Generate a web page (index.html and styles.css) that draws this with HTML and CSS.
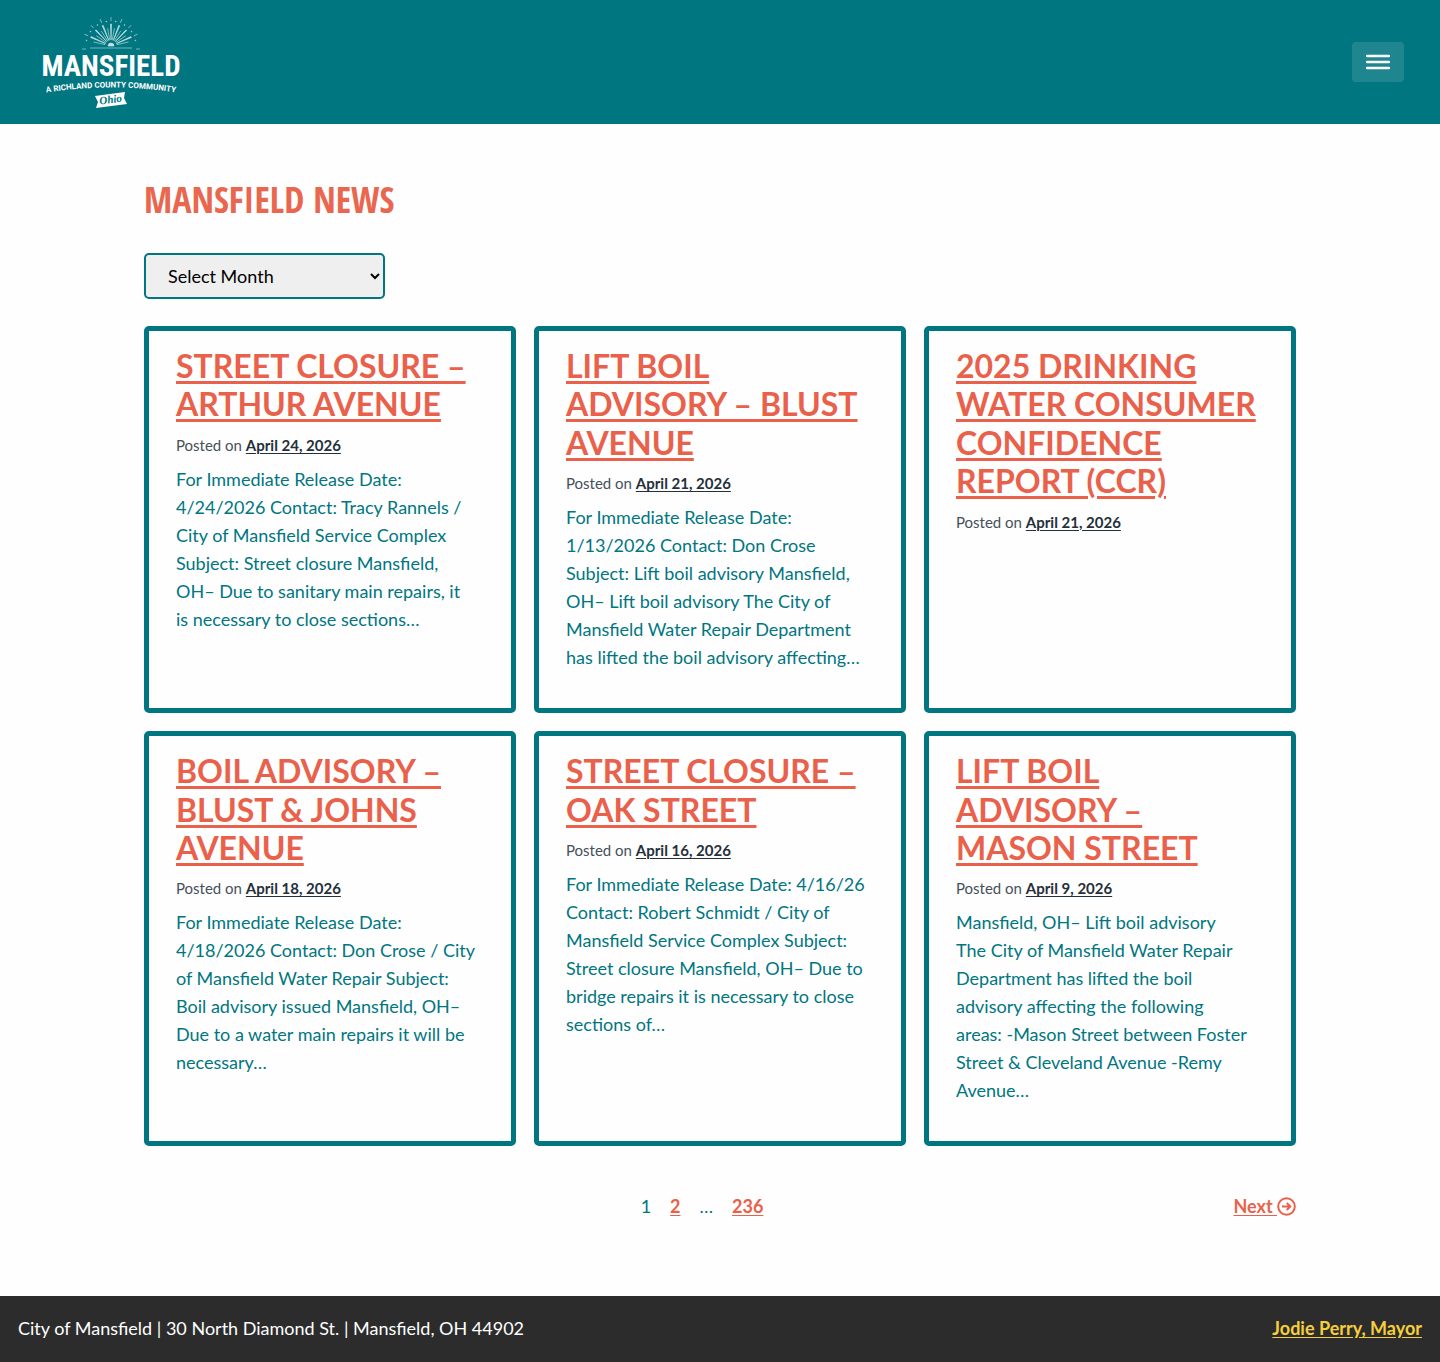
FILE: index.html
```
<!DOCTYPE html>
<html lang="en">
<head>
    <meta charset="UTF-8">
    <meta name="viewport" content="width=device-width, initial-scale=1.0">
    <title>Mansfield News</title>

    <link rel="stylesheet" href="styles.css">
</head>

<body>
    <header class="site-header">
        <a class="logo" href="#" aria-label="City of Mansfield home">
            <svg width="150" height="100" viewBox="0 0 150 100">
                <defs>
                    <g id="ray">
                        <path d="M75 28 L74.500 12 H75.500 Z" />
                        <path d="M75 9 V5" />
                    </g>
                    <g id="ray-short">
                        <path d="M75 28 V16" />
                        <circle cx="75" cy="9" r=".4" />
                    </g>
                    <path id="arc" d="M7 81 Q75 70 143 81" />
                </defs>
                <g class="sunburst">
                    <use href="#ray" />
                    <use href="#ray-short" transform="rotate(-11 75 34)" />
                    <use href="#ray-short" transform="rotate(11 75 34)" />
                    <use href="#ray" transform="rotate(-22 75 34)" />
                    <use href="#ray" transform="rotate(22 75 34)" />
                    <use href="#ray-short" transform="rotate(-33 75 34)" />
                    <use href="#ray-short" transform="rotate(33 75 34)" />
                    <use href="#ray" transform="rotate(-44 75 34)" />
                    <use href="#ray" transform="rotate(44 75 34)" />
                    <use href="#ray-short" transform="rotate(-55 75 34)" />
                    <use href="#ray-short" transform="rotate(55 75 34)" />
                    <use href="#ray" transform="rotate(-66 75 34)" />
                    <use href="#ray" transform="rotate(66 75 34)" />
                    <use href="#ray-short" transform="rotate(-77 75 34)" />
                    <use href="#ray-short" transform="rotate(77 75 34)" />
                    <path d="M72 34 a3 3 0 0 1 6 0 Z" />
                    <path d="M46 37 H50 M54 36 H96 M100 37 H104" />
                </g>
                <text class="logo-name" x="75" y="64">MANSFIELD</text>
                <text class="logo-tagline"><textPath href="#arc" startOffset="50%">A RICHLAND COUNTY COMMUNITY</textPath></text>
                <path class="ribbon" d="M59 84 L89 80 L88 86 L91 92 L60 96 L62 90 Z" />
                <text class="logo-state" x="75" y="91" transform="rotate(-7 75 91)">Ohio</text>
            </svg>
        </a>
        <button class="menu-button" aria-label="Menu">
            <svg width="24" height="16" viewBox="0 0 24 16">
                <path d="M1 2 H23 M1 8 H23 M1 14 H23" />
            </svg>
        </button>
    </header>

    <main>
        <h1>Mansfield News</h1>

        <select class="archive" aria-label="Archives">
            <option>Select Month</option>
        </select>

        <div class="posts">
            <article class="card">
                <h2><a href="#">Street Closure – Arthur Avenue</a></h2>
                <p class="posted">Posted on <a href="#">April 24, 2026</a></p>
                <p>For Immediate Release Date: 4/24/2026 Contact: Tracy Rannels / City of Mansfield Service Complex Subject: Street closure Mansfield, OH– Due to sanitary main repairs, it is&nbsp;necessary to close sections…</p>
            </article>

            <article class="card">
                <h2><a href="#">Lift Boil Advisory – Blust Avenue</a></h2>
                <p class="posted">Posted on <a href="#">April 21, 2026</a></p>
                <p>For Immediate Release Date: 1/13/2026 Contact: Don Crose Subject: Lift boil advisory Mansfield, OH– Lift boil advisory The City of Mansfield Water Repair Department has lifted the boil advisory affecting…</p>
            </article>

            <article class="card">
                <h2><a href="#">2025 Drinking Water Consumer Confidence Report (CCR)</a></h2>
                <p class="posted">Posted on <a href="#">April 21, 2026</a></p>
            </article>

            <article class="card">
                <h2><a href="#">Boil Advisory – Blust &amp; Johns Avenue</a></h2>
                <p class="posted">Posted on <a href="#">April 18, 2026</a></p>
                <p>For Immediate Release Date: 4/18/2026 Contact: Don Crose / City of Mansfield Water Repair Subject: Boil advisory issued Mansfield, OH– Due to a water main repairs it will be necessary…</p>
            </article>

            <article class="card">
                <h2><a href="#">Street Closure – Oak Street</a></h2>
                <p class="posted">Posted on <a href="#">April 16, 2026</a></p>
                <p>For Immediate Release Date: 4/16/26 Contact: Robert Schmidt / City of Mansfield Service Complex Subject: Street closure Mansfield, OH– Due to bridge repairs it is necessary to close sections of…</p>
            </article>

            <article class="card">
                <h2><a href="#">Lift Boil Advisory – Mason Street</a></h2>
                <p class="posted">Posted on <a href="#">April 9, 2026</a></p>
                <p>Mansfield, OH– Lift boil advisory <br>The City of Mansfield Water Repair Department has lifted the boil advisory affecting the following areas:&nbsp;-Mason Street between Foster Street &amp; Cleveland Avenue -Remy Avenue…</p>
            </article>
        </div>

        <nav class="pagination" aria-label="Posts">
            <div class="pages">
                <span>1</span>
                <a href="#">2</a>
                <span>…</span>
                <a href="#">236</a>
            </div>
            <a class="next" href="#">Next <svg width="19" height="19" viewBox="0 0 19 19">
                <circle cx="9.500" cy="9.500" r="8.300" />
                <path d="M5 9.500 H13 M9.800 6 L13.300 9.500 L9.800 13" />
            </svg></a>
        </nav>
    </main>

    <footer class="site-footer">
        <span>City of Mansfield | 30 North Diamond St. | Mansfield, OH 44902</span>
        <a href="#">Jodie Perry, Mayor</a>
    </footer>
</body>
</html>
```
FILE: styles.css
```
* {
    box-sizing: border-box;
}

body {
    margin: 0;
    background-color: #fefefe;
    color: #007681;
    font-family: Lato, "Open Sans", sans-serif;
    font-size: 18px;
    line-height: 28px;
}

a {
    color: #e9614a;
    font-weight: bold;
    text-underline-offset: 2px;
}

.site-header {
    display: flex;
    justify-content: space-between;
    align-items: center;
    padding: 12px 36px;
    background-color: #007681;
}

.logo svg {
    display: block;
}

.sunburst {
    fill: #c5e3e4;
    stroke: #c5e3e4;
    stroke-width: 0.6;
}

.logo-name,
.logo-tagline,
.logo-state {
    text-anchor: middle;
    font-weight: bold;
}

.logo-name {
    fill: white;
    font-family: "Roboto Condensed", Roboto, sans-serif;
    font-size: 29px;
}

.logo-tagline {
    fill: white;
    font-family: "Roboto", sans-serif;
    font-size: 8px;
}

.ribbon {
    fill: white;
}

.logo-state {
    fill: #007681;
    font-family: "Liberation Serif", serif;
    font-size: 11px;
    font-style: italic;
}

.menu-button {
    display: flex;
    justify-content: center;
    align-items: center;
    width: 52px;
    height: 40px;
    padding: 0;
    border: none;
    border-radius: 4px;
    background-color: rgba(255, 255, 255, 0.12);
}

.menu-button svg {
    fill: none;
    stroke: white;
    stroke-width: 2.5;
    stroke-linecap: round;
}

main {
    width: 80%;
    margin: 0 auto;
    padding: 54px 0 76px;
}

h1 {
    margin: 0 0 31px;
    color: #e9674f;
    font-family: "Open Sans Condensed", "Roboto Condensed", sans-serif;
    font-size: 36px;
    line-height: 44px;
    text-transform: uppercase;
}

.archive {
    display: block;
    width: 241px;
    height: 46px;
    margin-bottom: 27px;
    padding: 0 0 0 18px;
    border: 2px solid #007681;
    border-radius: 5px;
    background-color: #efefef;
    color: black;
    font-family: inherit;
    font-size: 18px;
}

.posts {
    display: grid;
    grid-template-columns: repeat(3, 1fr);
    gap: 18px;
}

.card {
    padding: 16px 32px 37px 27px;
    border: 5px solid #007681;
    border-radius: 5px;
}

.card h2 {
    margin: 0 0 9px;
    font-size: 32px;
    line-height: 1.2;
    text-transform: uppercase;
}

.card h2 a {
    text-underline-offset: 3px;
}

.card p {
    margin: 0;
}

.card .posted {
    margin-bottom: 8px;
    color: #46505a;
    font-size: 15px;
    line-height: 24px;
}

.posted a {
    color: #25303b;
}

.pagination {
    display: grid;
    grid-template-columns: 1fr auto 1fr;
    margin-top: 46px;
}

.pages {
    grid-column: 2;
    display: flex;
    gap: 19px;
    padding-right: 36px;
}

.next {
    justify-self: end;
}

.next svg {
    vertical-align: -3px;
    fill: none;
    stroke: #e9614a;
    stroke-width: 2;
}

.site-footer {
    display: flex;
    justify-content: space-between;
    padding: 18px 18px 20px;
    background-color: #2c2c2c;
    color: white;
}

.site-footer a {
    color: #f6cf3c;
}
```
